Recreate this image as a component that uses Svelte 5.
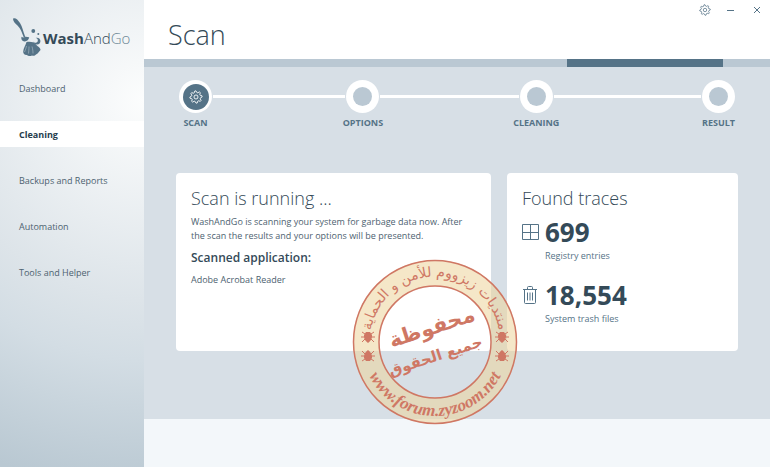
<script>
  const pages = ['Dashboard', 'Cleaning', 'Backups and Reports', 'Automation', 'Tools and Helper'];
  const current = 'Cleaning';
  const steps = [
    { label: 'SCAN', span: 134, active: true },
    { label: 'OPTIONS', span: 140 },
    { label: 'CLEANING', span: 149 },
    { label: 'RESULT' }
  ];
  const progress = { start: 67.5, width: 25 };
  const gear = Array.from({ length: 32 }, (_, i) => {
    const a = ((i - 0.5) * Math.PI) / 16 - Math.PI / 2 - Math.PI / 32;
    const r = i % 4 < 2 ? 7 : 5.2;
    return `${(8 + r * Math.cos(a)).toFixed(2)},${(8 + r * Math.sin(a)).toFixed(2)}`;
  }).join(' ');
</script>

{#snippet gearIcon(size)}
  <svg width={size} height={size} viewBox="0 0 16 16" fill="none" stroke="currentColor" stroke-linejoin="round" aria-hidden="true">
    <polygon points={gear} />
    <circle cx="8" cy="8" r="2.3" />
  </svg>
{/snippet}

<div class="window">
  <aside>
    <div class="brand">
      <svg width="30" height="42" viewBox="0 0 30 42" aria-hidden="true">
        <path d="M.2 1.500C2 .3 5 2.500 7 6c2.500 4 3 8 5.200 13.800l-1.400.6C8.500 14.500 7.500 11.500 4.500 8.500 2 6.300-.5 3.500.2 1.500Z" />
        <path d="M8.500 19.800c1.500 1.200 2.500.8 3.500 0 1.500-.6 3 .6 4.200.4-.2 1.600-1 2.800-2.400 3.600-1.400.8-3 .8-4.200 0-1.200-1-1.500-2.400-1.100-4Z" />
        <path d="M13.500 25c3.500-.8 7.500 0 9 2 1.500 2.500 5 3 5 6-1.500 1.800-2.500 3.600-4.500 4.500-1 1.500-3 1.500-4 1-2 1-4 .5-5-.5-2.500.2-4-1.500-3.800-3.500.3-3.500 2.300-6 3.300-9.500Z" />
        <path d="M20 24.500c1.500 1.800 4 1.500 4.700-.3.600-1.600-.5-3-2-3.200 2.800-.6 5 1 4.700 3.500-.2 2-1.800 3.200-3.500 3-1.700 0-3.200-1.200-3.900-3Z" />
        <path d="M13.500 29c-.5 2.500-1.200 4-2 6M16 29.500c0 3-.3 5-.5 7M19 29.500c.8 3 1 5 1 7" fill="none" stroke="#dfe6ea" stroke-width=".4" />
        <circle cx="20.300" cy="14" r="1.900" /><circle cx="25.300" cy="17" r="1" />
      </svg>
      <span class="name"><b>Wash</b><span>And</span><i>Go</i></span>
    </div>
    <nav>
      {#each pages as page}
        <a href="#{page}" class:current={page === current} aria-current={page === current ? 'page' : undefined}>{page}</a>
      {/each}
    </nav>
  </aside>

  <main>
    <header>
      <h1>Scan</h1>
      <div class="controls">
        <button aria-label="Settings">{@render gearIcon(12)}</button>
        <button aria-label="Minimize"><svg width="8" height="8" viewBox="0 0 8 8" stroke="currentColor"><path d="M0 4.500h7" /></svg></button>
        <button aria-label="Close"><svg width="8" height="8" viewBox="0 0 8 8" stroke="currentColor"><path d="m1 1 6 6m0-6-6 6" /></svg></button>
      </div>
    </header>
    <div class="progress" role="progressbar" aria-label="Scan progress">
      <div style="margin-left: {progress.start}%; width: {progress.width}%"></div>
    </div>

    <section class="body">
      <div class="steps">
        {#each steps as step}
          <div class="step" class:active={step.active}>
            <div class="ring"><div class="dot">{#if step.active}{@render gearIcon(14)}{/if}</div></div>
            <span>{step.label}</span>
          </div>
          {#if step.span}
            <div class="link" style="flex-grow: {step.span}"></div>
          {/if}
        {/each}
      </div>

      <div class="cards">
        <article>
          <h2>Scan is running ...</h2>
          <p>WashAndGo is scanning your system for garbage data now. After the scan the results and your options will be presented.</p>
          <h3>Scanned application:</h3>
          <p>Adobe Acrobat Reader</p>
        </article>
        <article>
          <h2>Found traces</h2>
          <div class="trace">
            <svg width="17" height="18" viewBox="0 0 17 18" fill="none" stroke="currentColor" aria-hidden="true">
              <path d="M.5 1.500h16v15H.5zM8.500 1.500v15M.5 9.500h16" />
            </svg>
            <strong>699</strong>
            <span>Registry entries</span>
          </div>
          <div class="trace">
            <svg width="17" height="18" viewBox="0 0 17 18" fill="none" stroke="currentColor" aria-hidden="true">
              <path d="M1 3.500h14M2.500 3.500v13a1 1 0 0 0 1 1h9a1 1 0 0 0 1-1v-13M5.500 3V1.500a1 1 0 0 1 1-1h3a1 1 0 0 1 1 1V3M5.500 6.500v8M8 6.500v8M10.500 6.500v8" />
            </svg>
            <strong>18,554</strong>
            <span>System trash files</span>
          </div>
        </article>
      </div>
    </section>
    <footer></footer>
  </main>

  <svg class="seal" width="166" height="166" viewBox="-83 -83 166 166" aria-hidden="true">
    <defs>
      <path id="arc-top" d="M-61 22A65 65 0 1 1 61 22" />
      <path id="arc-bottom" d="M-74 0A74 74 0 0 0 74 0" />
      <g id="bug">
        <path d="M-2-5h4l2 3c.5 3-1 6-4 8-3-2-4.500-5-4-8Z" />
        <path d="M-3-3-6-5M-4 0h-3M-3 2l-3 3M3-3l3-2M4 0h3M3 2l3 3" fill="none" stroke="#cf7764" />
      </g>
    </defs>
    <circle r="69" fill="none" stroke="#edd39b" stroke-opacity=".55" stroke-width="26" />
    <circle r="81.500" fill="none" stroke="#cf7764" stroke-width="1.500" />
    <circle r="56" fill="none" stroke="#cf7764" stroke-width="1.500" />
    <g class="ink" text-anchor="middle">
      <text class="arabic arc"><textPath href="#arc-top" startOffset="50%">منتديات زيزووم للأمن و الحماية</textPath></text>
      <text class="latin"><textPath href="#arc-bottom" startOffset="50%">www.forum.zyzoom.net</textPath></text>
      <text class="arabic big" transform="translate(-1 -8) rotate(-18)">محفوظة</text>
      <text class="arabic mid" transform="translate(2 19) rotate(-18)">جميع الحقوق</text>
      <use href="#bug" x="-67" y="-5" /><use href="#bug" x="67" y="-5" />
      <use href="#bug" transform="translate(-67 14) scale(1 -1)" /><use href="#bug" transform="translate(67 14) scale(1 -1)" />
    </g>
  </svg>
</div>

<style>
  :global(body) {
    margin: 0;
  }
  .window {
    position: relative;
    display: flex;
    min-height: 100vh;
    font-family: 'Open Sans', 'Noto Sans', sans-serif;
    font-size: 9px;
    font-weight: 400;
    color: #4d6270;
  }
  h1, h2, h3, p {
    margin: 0;
  }
  aside {
    flex: 0 0 144px;
    background: radial-gradient(circle at 144px 100px, #fcfdfd 0, #dde4e9 200px, #d3dde4 260px, #b9c8d2 390px);
  }
  .brand {
    display: flex;
    align-items: center;
    box-sizing: border-box;
    height: 65px;
    padding: 10px 0 0 13px;
    fill: #557387;
  }
  .name {
    font-size: 15px;
    line-height: 20px;
    color: #344a58;
    font-weight: 300;
  }
  .name b {
    font-weight: 700;
  }
  .name i {
    font-style: normal;
    color: #6b8594;
  }
  nav {
    display: flex;
    flex-direction: column;
    gap: 20px;
    padding-top: 10px;
  }
  nav a {
    padding: 2px 0 0 19px;
    line-height: 24px;
    color: #4d6270;
    text-decoration: none;
  }
  nav a.current {
    background: #fff;
    color: #263d4d;
    font-weight: 700;
  }
  main {
    flex: 1;
    display: flex;
    flex-direction: column;
    min-width: 0;
  }
  header {
    display: flex;
    justify-content: space-between;
    height: 59px;
    background: #fff;
  }
  h1 {
    padding: 15px 0 0 24px;
    font-size: 27px;
    line-height: 40px;
    font-weight: 300;
    color: #344a58;
  }
  .controls {
    display: flex;
    gap: 6px;
    padding: 0 3px 0 0;
  }
  .controls button {
    display: grid;
    place-items: center;
    width: 20px;
    height: 20px;
    padding: 0;
    border: 0;
    background: none;
    color: #557387;
  }
  .progress {
    height: 8px;
    background: #bac8d3;
  }
  .progress div {
    height: 100%;
    background: #557387;
  }
  .body {
    flex: 1;
    background: #d7dfe6;
  }
  .steps {
    display: flex;
    padding: 13px 35px 0;
  }
  .step {
    display: flex;
    flex-direction: column;
    align-items: center;
    width: 33px;
    line-height: 12px;
    font-weight: 700;
    color: #557387;
    white-space: nowrap;
  }
  .ring {
    display: grid;
    place-items: center;
    width: 33px;
    height: 33px;
    margin-bottom: 4px;
    border-radius: 50%;
    background: #fff;
  }
  .dot {
    display: grid;
    place-items: center;
    width: 19px;
    height: 19px;
    border-radius: 50%;
    background: #bac8d3;
    color: #fff;
  }
  .active .dot {
    width: 26px;
    height: 26px;
    background: #557387;
  }
  .link {
    height: 3px;
    margin: 15px 1px 0;
    background: #fff;
  }
  .cards {
    display: grid;
    grid-template-columns: 315fr 231fr;
    gap: 16px;
    padding: 44px 32px 68px;
  }
  article {
    box-sizing: border-box;
    min-height: 178px;
    padding: 12px 15px;
    border-radius: 4px;
    background: #fff;
  }
  h2 {
    font-size: 18px;
    line-height: 26px;
    font-weight: 300;
    color: #344a58;
  }
  p {
    margin-top: 4px;
    line-height: 14px;
  }
  h3 {
    margin-top: 6px;
    font-size: 12px;
    line-height: 18px;
    font-weight: 600;
    color: #344a58;
  }
  h3 + p {
    margin-top: 6px;
  }
  .trace {
    display: grid;
    grid-template-columns: 17px 1fr;
    column-gap: 6px;
    align-items: center;
    margin-top: 4px;
    padding-bottom: 11px;
    color: #557387;
  }
  .trace strong {
    font-size: 26px;
    line-height: 34px;
    color: #344a58;
  }
  .trace span {
    grid-column: 2;
    line-height: 14px;
  }
  footer {
    height: 48px;
    background: #f3f7fa;
  }
  .seal {
    position: absolute;
    left: 352px;
    top: 259px;
  }
  .ink {
    fill: #cf7764;
  }
  .arabic {
    font-family: 'DejaVu Sans', sans-serif;
  }
  .arc {
    font-size: 14px;
  }
  .big {
    font-size: 21px;
    font-weight: 700;
  }
  .mid {
    font-size: 15px;
    font-weight: 700;
  }
  .latin {
    font: italic 700 17px 'Liberation Serif', serif;
  }
</style>
